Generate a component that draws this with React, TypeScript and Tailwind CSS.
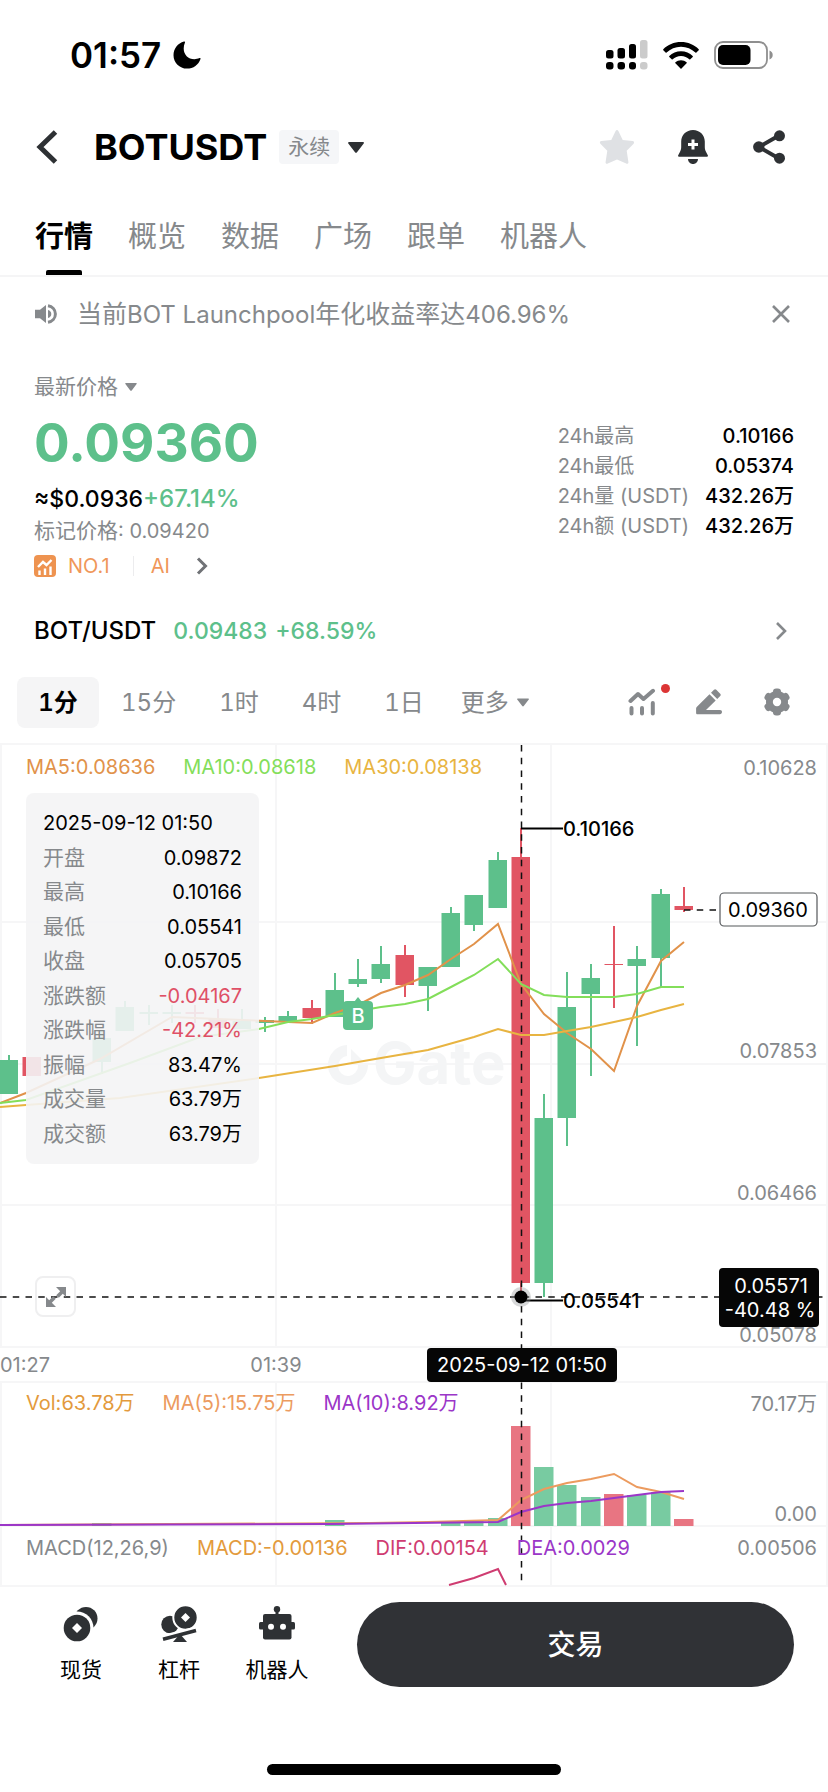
import React from "react";

const GREEN = "#5dc08b";
const RED = "#e15563";
const GRAY = "#86898c";

type Candle = { x: number; hi: number; top: number; bottom: number; lo: number; up: boolean };

const c = (x: number, hi: number, top: number, bottom: number, lo: number, up = true): Candle => ({
  x,
  hi,
  top,
  bottom,
  lo,
  up,
});

const candles: Candle[] = [
  c(9, 1054, 1059, 1093, 1093),
  c(32, 1056, 1056, 1075, 1075, false),
  c(102, 1030, 1037, 1061, 1073),
  c(125, 1000, 1006, 1030, 1030),
  c(149, 1004, 1011, 1013, 1024),
  c(172, 1004, 1011, 1013, 1022),
  c(195, 1004, 1011, 1013, 1022, false),
  c(218, 1008, 1018, 1027, 1027, false),
  c(242, 1008, 1020, 1028, 1028),
  c(265, 1016, 1019, 1022, 1031),
  c(288, 1010, 1015, 1020, 1020),
  c(312, 999, 1007, 1017, 1023, false),
  c(335, 972, 989, 1016, 1016),
  c(358, 958, 978, 983, 986),
  c(381, 945, 963, 978, 982),
  c(405, 944, 954, 984, 996, false),
  c(428, 966, 966, 985, 1010),
  c(451, 906, 912, 966, 966),
  c(474, 894, 894, 924, 930),
  c(498, 851, 859, 907, 907),
  c(521, 827, 856, 1282, 1299, false),
  c(544, 1093, 1117, 1282, 1296),
  c(567, 971, 1006, 1117, 1145),
  c(591, 963, 977, 993, 1075),
  c(614, 925, 963, 964, 1007, false),
  c(637, 945, 958, 965, 1045),
  c(661, 888, 893, 957, 986),
  c(684, 886, 905, 909, 911, false),
];

const volumes: [number, number, boolean][] = [
  [102, 1522, true],
  [335, 1519, true],
  [451, 1520, true],
  [474, 1519, true],
  [498, 1517, true],
  [521, 1425, false],
  [544, 1466, true],
  [567, 1484, true],
  [591, 1496, true],
  [614, 1493, false],
  [637, 1494, true],
  [661, 1491, true],
  [684, 1518, false],
];

const MA5 =
  "0,1102 26,1092 100,1058 172,1016 218,1018 265,1020 288,1021 312,1022 335,1012 358,1004 381,992 405,984 428,974 451,958 474,943 498,923 521,983 544,1013 567,1032 591,1048 614,1070 637,1005 661,960 684,941";
const MA10 =
  "0,1102 26,1099 130,1062 200,1036 259,1028 288,1021 312,1018 335,1014 358,1010 381,1006 405,1003 428,998 451,986 474,974 498,958 521,983 544,994 567,996 614,996 637,993 661,986 684,986";
const MA30 =
  "0,1106 26,1104 120,1097 259,1077 335,1065 381,1057 428,1049 474,1036 498,1028 521,1034 544,1034 567,1030 591,1026 614,1021 637,1016 661,1009 684,1003";
const VOL_MA5 =
  "0,1524 370,1522 428,1521 498,1519 521,1499 544,1488 567,1482 591,1478 614,1473 637,1486 661,1491 684,1498";
const VOL_MA10 =
  "0,1524 330,1523 498,1521 521,1511 544,1505 567,1502 591,1500 614,1497 637,1494 661,1491 684,1490";

function Caret({ className }: { className: string }) {
  return (
    <svg viewBox="0 0 16 11" className={className} fill="currentColor" aria-hidden="true">
      <path d="M1 0h14c.8 0 1.200.9.7 1.500L9 10.300c-.5.7-1.500.7-2 0L.3 1.500C-.2.9.200 0 1 0z" />
    </svg>
  );
}

function StatusBar() {
  return (
    <div className="flex h-[110px] items-center justify-between pl-[70px] pr-[54px]">
      <div className="flex items-center gap-3">
        <span className="text-[35px] font-semibold leading-[40px]">01:57</span>
        <svg viewBox="0 0 28 28" className="size-7" aria-hidden="true">
          <path d="M11 0.500C4.800 2.200.500 7.600.500 14.200.500 21.600 6.500 27.600 14 27.600c6.400 0 11.600-4 13.500-9.700.2-.7-.4-1.100-1-.8-1.700.8-3.300 1.100-5.100 1.100-6.300 0-10.700-4.500-10.700-10.700 0-2.100.4-4 1.200-5.700.4-.8-.1-1.500-.9-1.300z" />
        </svg>
      </div>
      <div className="flex items-center">
        <svg viewBox="0 0 42 30" className="h-[30px] w-[42px]" aria-hidden="true">
          <rect x="0" y="10" width="7.500" height="8.500" rx="2.500" />
          <rect x="11.500" y="8" width="7.500" height="10.500" rx="2.500" />
          <rect x="23" y="4" width="7" height="14.500" rx="2.500" />
          <rect x="0" y="22" width="7.500" height="7.500" rx="3" />
          <rect x="11.500" y="22" width="7.500" height="7.500" rx="3" />
          <rect x="23" y="22" width="7" height="7.500" rx="3" />
          <rect x="34" y="0" width="7.500" height="18.500" rx="2.500" fill="#cbcbcb" />
          <rect x="34" y="22" width="7.500" height="7.500" rx="3" fill="#cbcbcb" />
        </svg>
        <svg viewBox="0 0 36 27" className="ml-[15px] h-[27px] w-9" aria-hidden="true">
          <path d="M18 0C11 0 4.700 2.700.300 7.200c-.3.300-.3.700 0 1l2.300 2.300c.3.300.7.3 1 0C7.300 6.900 12.400 4.700 18 4.700s10.700 2.200 14.400 5.800c.3.300.7.3 1 0l2.300-2.300c.3-.3.3-.7 0-1C31.300 2.700 25 0 18 0z" />
          <path d="M18 9.200c-4.600 0-8.700 1.800-11.700 4.700-.3.300-.3.700 0 1l2.400 2.400c.3.300.7.3 1 0 2.100-2 5-3.300 8.300-3.300s6.200 1.300 8.300 3.300c.3.300.7.3 1 0l2.400-2.400c.3-.3.3-.7 0-1-3-2.900-7.100-4.700-11.700-4.700z" />
          <path d="M18 18.200c-2.200 0-4.100.8-5.600 2-.3.300-.3.700 0 1l5.100 5.200c.3.300.7.3 1 0l5.100-5.200c.3-.3.3-.7 0-1-1.500-1.200-3.400-2-5.600-2z" />
        </svg>
        <svg viewBox="0 0 60 28" className="ml-[15px] h-7 w-[60px]" aria-hidden="true">
          <rect x="1" y="1" width="52" height="26" rx="8" fill="none" stroke="#8f8f8f" strokeWidth="1.800" />
          <rect x="4" y="4" width="32.500" height="20" rx="5" />
          <path d="M55.500 9.500c2 .7 3.200 2.300 3.200 4.500s-1.200 3.800-3.200 4.500z" fill="#8f8f8f" />
        </svg>
      </div>
    </div>
  );
}

function Header() {
  return (
    <header className="flex h-[74px] items-center justify-between pl-[36px] pr-[43px] text-[#2e3134]">
      <div className="flex items-center">
        <button aria-label="返回" className="w-[58px]">
          <svg viewBox="0 0 22 34" className="h-[34px] w-[22px]" fill="none" stroke="currentColor" strokeWidth="5">
            <path d="M19.500 2L4 17l15.500 15" />
          </svg>
        </button>
        <h1 className="text-[36px] font-bold leading-[44px] text-black">BOTUSDT</h1>
        <span className="ml-[12px] rounded bg-[#f5f6f8] px-[9px] text-[21px] leading-[34px] text-[#86898c]">永续</span>
        <button aria-label="切换合约" className="ml-[9px]">
          <Caret className="h-[11px] w-4" />
        </button>
      </div>
      <div className="flex items-center">
        <button aria-label="收藏">
          <svg viewBox="0 0 36 34" className="h-[34px] w-9" fill="#dfe1e4">
            <path d="M16.600.9c.6-1.200 2.200-1.200 2.800 0l4.300 9 10 1.200c1.400.2 1.900 1.700.9 2.700l-6.900 7 1.700 11.300c.2 1.300-1 2.100-2.200 1.500L18 29.500l-9.200 4.100c-1.200.6-2.400-.2-2.200-1.500l1.700-11.300-6.900-7C.4 12.800.900 11.300 2.300 11.100l10-1.200z" />
          </svg>
        </button>
        <button aria-label="价格提醒" className="ml-[43px]">
          <svg viewBox="0 0 30 34" className="h-[34px] w-[30px]" fill="currentColor">
            <path d="M15 0C8.300 0 3.200 5 3.200 11.500V17c0 2-.4 3.200-1.300 5L.2 25.300c-.4.800 0 1.400.9 1.400h27.800c.9 0 1.300-.6.9-1.400L28.100 22c-.9-1.800-1.300-3-1.300-5v-5.500C26.800 5 21.700 0 15 0z" />
            <path d="M10 29h10c0 2.800-2.200 5-5 5s-5-2.200-5-5z" />
            <path d="M15 9.500v10M10 14.500h10" stroke="#fff" strokeWidth="3" />
          </svg>
        </button>
        <button aria-label="分享" className="ml-[45px]">
          <svg viewBox="0 0 32 34" className="h-[34px] w-8" fill="currentColor">
            <path d="M26 5.500L6 17l20 11.500" fill="none" stroke="currentColor" strokeWidth="4" />
            <circle cx="26.500" cy="5.800" r="5.500" />
            <circle cx="5.800" cy="17" r="5.700" />
            <circle cx="26.500" cy="28.200" r="5.500" />
          </svg>
        </button>
      </div>
    </header>
  );
}

function Tabs() {
  const tabs = ["行情", "概览", "数据", "广场", "跟单", "机器人"];
  return (
    <nav className="flex h-[93px] gap-[35px] border-b-2 border-[#f5f5f6] px-[35px] pt-[32px]">
      {tabs.map((tab, i) => (
        <a
          key={tab}
          href="#"
          className={
            i === 0
              ? "flex flex-col items-center justify-between text-[29px] font-bold leading-[42px] text-black"
              : "text-[29px] leading-[42px] text-[#86898c]"
          }
        >
          {tab}
          {i === 0 && <span className="h-[5px] w-9 rounded-t-[2px] bg-black" />}
        </a>
      ))}
    </nav>
  );
}

function Notice() {
  return (
    <div className="flex h-[74px] items-center pl-[35px] pr-[34px] text-[#86898c]">
      <svg viewBox="0 0 22 20" className="mr-[20px] h-5 w-[22px]" fill="currentColor" aria-hidden="true">
        <path d="M0 5.800h5L11 1v18l-6-4.800H0z" />
        <path d="M13 6c2 .5 3.300 2 3.300 4s-1.300 3.500-3.300 4z" />
        <path d="M13 1.800c4.300.7 7.400 4 7.400 8.200s-3.100 7.500-7.400 8.200" fill="none" stroke="currentColor" strokeWidth="3" />
      </svg>
      <p className="flex-1 text-[25px] leading-[34px]">
        当前<span className="text-[24px]">BOT Launchpool</span>年化收益率达<span className="text-[24px]">406.96%</span>
      </p>
      <button aria-label="关闭" className="px-1">
        <svg viewBox="0 0 18 18" className="size-[18px]" fill="none" stroke="currentColor" strokeWidth="2.600">
          <path d="M1 1l16 16M17 1L1 17" />
        </svg>
      </button>
    </div>
  );
}

function Quote() {
  const stats: [string, string][] = [
    ["24h最高", "0.10166"],
    ["24h最低", "0.05374"],
    ["24h量 (USDT)", "432.26万"],
    ["24h额 (USDT)", "432.26万"],
  ];
  return (
    <section className="flex justify-between px-[34px] pt-[20px] text-[20px]">
      <div>
        <button className="flex items-center gap-[7px] text-[21px] leading-8 text-[#86898c]">
          最新价格
          <Caret className="h-2 w-3" />
        </button>
        <p className="mt-[6px] text-[53px] font-bold leading-[68px] text-[#5dc08b]">0.09360</p>
        <p className="mt-[6px] text-[23px] font-medium leading-8">
          ≈$0.0936<span className="text-[24px] text-[#5dc08b]">+67.14%</span>
        </p>
        <p className="leading-8 text-[#86898c]">
          <span className="text-[21px]">标记价格</span>: 0.09420
        </p>
        <a href="#" className="mt-[3px] flex items-center leading-8 text-[#f0975a]">
          <svg viewBox="0 0 22 22" className="mr-3 size-[22px]" aria-hidden="true">
            <rect width="22" height="22" rx="4" fill="#ee9350" />
            <path d="M4 12l5-5 3.500 3L17.500 5" fill="none" stroke="#fff" strokeWidth="2.400" />
            <path d="M5.500 15.500V20M11 13.500V20M16.500 11.500V20" stroke="#fff" strokeWidth="2.400" />
          </svg>
          NO.1
          <span className="ml-[23px] mr-[17px] h-5 w-px bg-[#ececee]" />
          AI
          <svg viewBox="0 0 12 18" className="ml-[26px] h-[18px] w-3" fill="none" stroke="#707276" strokeWidth="3">
            <path d="M2 1.500L9.500 9 2 16.500" />
          </svg>
        </a>
      </div>
      <dl className="grid grid-cols-[auto_auto] content-start gap-x-[16px] pt-[50px] leading-[30px]">
        {stats.map(([label, value]) => (
          <React.Fragment key={label}>
            <dt className="text-[#86898c]">{label}</dt>
            <dd className="text-right font-medium">{value}</dd>
          </React.Fragment>
        ))}
      </dl>
    </section>
  );
}

function SpotRow() {
  return (
    <a href="#" className="flex h-[79px] items-center pl-[34px] pr-[41px] pt-[18px] text-[23px] font-medium leading-8">
      <span className="text-[24px]">BOT/USDT</span>
      <span className="ml-[17px] text-[#5dc08b]">0.09483</span>
      <span className="ml-[8px] text-[#5dc08b]">+68.59%</span>
      <svg viewBox="0 0 12 18" className="ml-auto h-[18px] w-3" fill="none" stroke={GRAY} strokeWidth="2.600">
        <path d="M2 1l8 8-8 8" />
      </svg>
    </a>
  );
}

function Intervals() {
  const items = ["15分", "1时", "4时", "1日"];
  return (
    <div className="flex h-[84px] items-center justify-between border-b-2 border-[#f6f6f7] pl-[17px] pr-[38px] text-[24px] leading-[51px] tabular-nums text-[#86898c]">
      <div className="flex items-center">
        <button className="w-[82px] rounded-lg bg-[#f5f5f6] font-semibold text-black">1分</button>
        <div className="ml-[22px] flex gap-[43px]">
          {items.map((item) => (
            <button key={item}>{item}</button>
          ))}
          <button className="-ml-[6px] flex items-center gap-[8px]">
            更多
            <Caret className="h-[9px] w-3" />
          </button>
        </div>
      </div>
      <div className="flex items-center">
        <button aria-label="指标" className="relative">
          <svg
            viewBox="0 0 28 28"
            className="size-7"
            fill="none"
            stroke={GRAY}
            strokeWidth="4"
            strokeLinecap="round"
            strokeLinejoin="round"
          >
            <path d="M2.500 13l7.500-7 5.500 5L25 2.800" />
            <path d="M3.500 20v5.500M14 20v5.500M24.800 15v10.500" />
          </svg>
          <span className="absolute -right-[14px] -top-[4px] size-[9px] rounded-full bg-[#dc3535]" />
        </button>
        <button aria-label="画图" className="ml-[40px]">
          <svg viewBox="0 0 26 26" className="size-[26px]" fill={GRAY}>
            <path d="M18 .8c.7-.7 1.700-.7 2.300 0l3.900 3.900c.7.700.7 1.700 0 2.300l-3 3L15 3.800z" />
            <path d="M13.500 5.300l6.200 6.200L10 21h14c1.300 0 2 .9 2 2.100s-.8 2.100-2 2.100H1.500c-.8 0-1.400-.5-1.400-1.300v-4.300c0-.6.2-1.100.6-1.500z" />
          </svg>
        </button>
        <button aria-label="设置" className="ml-[42px]">
          <svg viewBox="0 0 26 28" className="h-7 w-[26px]" fill={GRAY}>
            <circle cx="13" cy="14" r="11" />
            <rect x="9" y="0.500" width="8" height="27" rx="3.200" />
            <rect x="9" y="0.500" width="8" height="27" rx="3.200" transform="rotate(60 13 14)" />
            <rect x="9" y="0.500" width="8" height="27" rx="3.200" transform="rotate(120 13 14)" />
            <circle cx="13" cy="14" r="4.200" fill="#fff" />
          </svg>
        </button>
      </div>
    </div>
  );
}

function ChartDrawing() {
  return (
    <svg
      viewBox="0 744 828 842"
      className="block w-full font-['Inter','Noto_Sans_CJK_SC',sans-serif] text-[20px]"
      role="img"
      aria-label="BOTUSDT 1分钟K线图"
    >
      <g stroke="#f6f6f7" strokeWidth="2">
        <path d="M0 921H828M0 1063H828M0 1204H828M0 1346H828M0 1381H828M0 1525H828M0 1585H828" />
        <path d="M1 744V1346M276 744V1346M551 744V1346M827 744V1346M1 1381V1585M276 1381V1585M551 1381V1585M827 1381V1585" />
      </g>

      <g fill="#f4f5f6">
        <path d="M347 1044a20 20 0 1021 20h-10a10 10 0 11-11-9z" />
        <path d="M351 1048l13 13h-13z" />
        <text x="373" y="1083" fontSize="58" fontWeight="700">
          Gate
        </text>
      </g>

      {candles.map((k) => (
        <g key={k.x} fill={k.up ? GREEN : RED}>
          <rect x={k.x - 1} y={k.hi} width="2" height={k.lo - k.hi} />
          <rect x={k.x - 9.500} y={k.top} width="18.500" height={k.bottom - k.top} />
        </g>
      ))}

      <g fill="none" strokeWidth="2">
        <polyline points={MA5} stroke="#e1924a" />
        <polyline points={MA10} stroke="#83de5a" />
        <polyline points={MA30} stroke="#e8b441" />
      </g>

      <g>
        <path d="M354 1001l4-5 4 5z" fill={GREEN} />
        <rect x="343" y="1000" width="30" height="29" rx="4" fill={GREEN} />
        <text x="358" y="1022" textAnchor="middle" fill="#fff" fontWeight="500">
          B
        </text>
      </g>

      {volumes.map(([x, y, up]) => (
        <rect key={x} x={x - 10} y={y} width="19.500" height={1525 - y} fill={up ? "#78cba1" : "#e87582"} />
      ))}
      <g fill="none" strokeWidth="2">
        <polyline points={VOL_MA5} stroke="#ec9b5f" />
        <polyline points={VOL_MA10} stroke="#9b36c8" />
        <polyline points="449,1584 474,1577 498,1568 506,1584" stroke="#cf3c71" />
      </g>

      <g fill={GRAY} textAnchor="end">
        <text x="817" y="774">0.10628</text>
        <text x="817" y="1057">0.07853</text>
        <text x="817" y="1199">0.06466</text>
        <text x="817" y="1341">0.05078</text>
        <text x="817" y="1410">70.17万</text>
        <text x="817" y="1520">0.00</text>
        <text x="817" y="1554">0.00506</text>
      </g>
      <g fill={GRAY}>
        <text x="0" y="1371">01:27</text>
        <text x="276" y="1371" textAnchor="middle">
          01:39
        </text>
      </g>

      <g stroke="#111" strokeWidth="1.500" strokeDasharray="6.500 6.250">
        <path d="M521.500 744V1584" />
        <path d="M0 1296H828" />
        <path d="M684 909H720" />
      </g>
      <path d="M521 827.500h42M525 1299.500h38" stroke="#000" strokeWidth="1.800" />
      <g fontWeight="500">
        <text x="563" y="835">0.10166</text>
        <text x="563" y="1307">0.05541</text>
      </g>
      <circle cx="521" cy="1296" r="10" fill="#8b8f92" opacity="0.350" />
      <circle cx="521" cy="1296" r="6.500" />

      <rect x="720" y="892" width="97" height="33" rx="4" fill="#fff" stroke="#55585b" strokeWidth="1.200" />
      <text x="768" y="916" textAnchor="middle">
        0.09360
      </text>

      <rect x="719" y="1267" width="100" height="59" rx="4" fill="#060606" />
      <g fill="#fff" textAnchor="middle">
        <text x="771" y="1292">0.05571</text>
        <text x="770" y="1316">-40.48 %</text>
      </g>
      <rect x="427" y="1347" width="190" height="34" rx="4" fill="#060606" />
      <text x="522" y="1371" textAnchor="middle" fill="#fff">
        2025-09-12 01:50
      </text>
    </svg>
  );
}

function CandleDetails() {
  const rows: [string, string, string][] = [
    ["开盘", "0.09872", "text-black"],
    ["最高", "0.10166", "text-black"],
    ["最低", "0.05541", "text-black"],
    ["收盘", "0.05705", "text-black"],
    ["涨跌额", "-0.04167", "text-[#df5066]"],
    ["涨跌幅", "-42.21%", "text-[#df5066]"],
    ["振幅", "83.47%", "text-black"],
    ["成交量", "63.79万", "text-black"],
    ["成交额", "63.79万", "text-black"],
  ];
  return (
    <div className="absolute left-[26px] top-[48px] flex h-[371px] w-[233px] flex-col justify-between rounded-lg bg-[#f4f4f5]/90 px-[17px] py-4 leading-7">
      <p>2025-09-12 01:50</p>
      {rows.map(([label, value, tone]) => (
        <p key={label} className="flex justify-between">
          <span className="text-[21px] text-[#86898c]">{label}</span>
          <span className={tone}>{value}</span>
        </p>
      ))}
    </div>
  );
}

function Chart() {
  return (
    <section className="relative text-[20px] leading-7">
      <ChartDrawing />
      <p className="absolute left-[26px] top-[8px] flex gap-[28px] whitespace-nowrap">
        <span className="text-[#e1924a]">MA5:0.08636</span>
        <span className="text-[#83de5a]">MA10:0.08618</span>
        <span className="text-[#e8b441]">MA30:0.08138</span>
      </p>
      <CandleDetails />
      <button
        aria-label="全屏"
        className="absolute left-[35px] top-[531px] flex size-[41px] items-center justify-center rounded-lg border-2 border-[#efeff0]"
      >
        <svg viewBox="0 0 20 20" className="size-5" fill={GRAY}>
          <path d="M10 0h10v10l-3.200-3.200-4 4-2.600-2.600 4-4zM10 20H0V10l3.200 3.200 4-4 2.600 2.600-4 4z" />
        </svg>
      </button>
      <p className="absolute left-[26px] top-[644px] flex gap-[28px] whitespace-nowrap">
        <span className="text-[#e39a3c]">Vol:63.78万</span>
        <span className="text-[#ec9b5f]">MA(5):15.75万</span>
        <span className="text-[#9b36c8]">MA(10):8.92万</span>
      </p>
      <p className="absolute left-[26px] top-[789px] flex gap-[28px] whitespace-nowrap">
        <span className="text-[#86898c]">MACD(12,26,9)</span>
        <span className="text-[#e39a3c]">MACD:-0.00136</span>
        <span className="text-[#cf3c71]">DIF:0.00154</span>
        <span className="text-[#9b36c8]">DEA:0.0029</span>
      </p>
    </section>
  );
}

function SpotIcon() {
  return (
    <svg viewBox="0 0 36 36" className="size-9" fill="#2e3134" aria-hidden="true">
      <circle cx="23" cy="12.500" r="11.500" />
      <circle cx="14" cy="22" r="16.500" fill="#fff" />
      <circle cx="14" cy="22" r="13.300" />
      <path d="M14 17l5 5-5 5-5-5z" fill="#fff" />
    </svg>
  );
}

function MarginIcon() {
  return (
    <svg viewBox="0 0 36 36" className="size-9" fill="#2e3134" aria-hidden="true">
      <circle cx="9" cy="18.500" r="8.700" />
      <circle cx="24.500" cy="11.500" r="12.200" stroke="#fff" strokeWidth="2" />
      <path d="M24.500 7l4.500 4.500-4.500 4.500-4.500-4.500z" fill="#fff" />
      <path d="M2 32L35 23.500" stroke="#fff" strokeWidth="6" />
      <path d="M2 33.200L35 24.500" stroke="#2e3134" strokeWidth="3.600" />
      <path d="M19 28l7 8H12z" />
    </svg>
  );
}

function RobotIcon() {
  return (
    <svg viewBox="0 0 36 36" className="size-9" fill="#2e3134" aria-hidden="true">
      <circle cx="18" cy="3.200" r="3.200" />
      <rect x="16.500" y="4" width="3" height="5" />
      <rect x="4" y="8" width="28.500" height="25.500" rx="2" />
      <rect x="0" y="16" width="36" height="7.500" rx="1.500" />
      <circle cx="12" cy="20.700" r="3" fill="#fff" />
      <circle cx="24" cy="20.700" r="3" fill="#fff" />
    </svg>
  );
}

function BottomBar() {
  return (
    <footer className="flex items-start pl-[32px] pr-[34px] pt-[15px]">
      <div className="flex text-[21px] leading-8">
        {[
          { label: "现货", icon: <SpotIcon /> },
          { label: "杠杆", icon: <MarginIcon /> },
          { label: "机器人", icon: <RobotIcon /> },
        ].map(({ label, icon }) => (
          <button key={label} className="flex w-[98px] flex-col items-center gap-[12px] pt-[4px]">
            {icon}
            {label}
          </button>
        ))}
      </div>
      <button className="ml-[31px] h-[85px] flex-1 rounded-full bg-[#303236] text-[28px] font-medium text-white">
        交易
      </button>
    </footer>
  );
}

export default function App() {
  return (
    <div className="flex min-h-screen flex-col bg-white font-['Inter','Noto_Sans_CJK_SC',sans-serif] text-black">
      <StatusBar />
      <Header />
      <Tabs />
      <Notice />
      <Quote />
      <SpotRow />
      <Intervals />
      <Chart />
      <BottomBar />
      <div className="mx-auto mb-[17px] mt-auto h-[11px] w-[294px] rounded-full bg-black" />
    </div>
  );
}
